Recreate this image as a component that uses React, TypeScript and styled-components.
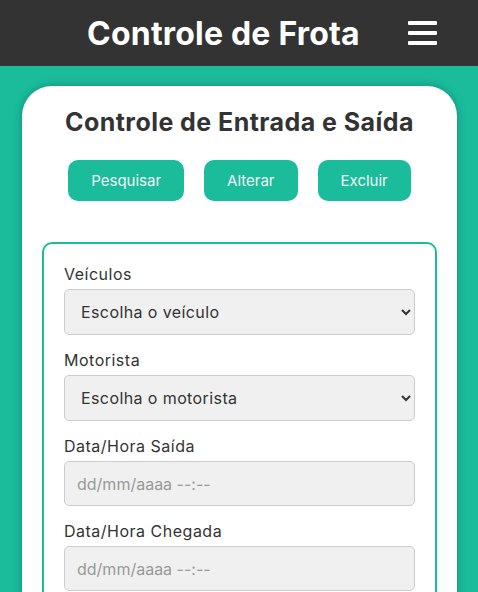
import styled, { createGlobalStyle } from "styled-components";

const GlobalStyle = createGlobalStyle`
  * {
    box-sizing: border-box;
  }

  html, body {
    margin: 0;
    padding: 0;
    background-color: #1abc9c;
    font-family: Inter, "Open Sans", "Liberation Sans", sans-serif;
    color: #333;
  }
`;

const Header = styled.header`
  height: 66px;
  background-color: #333;
  display: flex;
  align-items: center;
  padding: 0 41px 0 39px;
`;

const Title = styled.h1`
  flex: 1;
  margin: 0;
  text-align: center;
  color: #fff;
  font-size: 32px;
  font-weight: 700;
  letter-spacing: 0.2px;
`;

const MenuButton = styled.button`
  width: 29px;
  padding: 0;
  border: none;
  background: none;
  display: flex;
  flex-direction: column;
  gap: 6px;
  cursor: pointer;

  span {
    display: block;
    height: 4px;
    border-radius: 1px;
    background-color: #fff;
  }
`;

const Main = styled.main`
  padding: 20px 21px 0 22px;
`;

const Card = styled.section`
  background-color: #fff;
  border-radius: 30px;
  box-shadow: 0 0 10px rgba(0, 0, 0, 0.25);
  padding: 20px 20px 40px;
`;

const CardTitle = styled.h2`
  margin: 1px 0 0;
  text-align: center;
  font-size: 25px;
  font-weight: 700;
  letter-spacing: 0.45px;
  color: #333;
  line-height: 30px;
`;

const Actions = styled.div`
  display: flex;
  justify-content: center;
  gap: 20px;
  margin-top: 23px;
`;

const ActionButton = styled.button`
  height: 41px;
  padding: 0 23px;
  border: none;
  border-radius: 10px;
  background-color: #1abc9c;
  color: #f4f4f4;
  font-family: inherit;
  font-size: 15px;
  cursor: pointer;
`;

const Fieldset = styled.fieldset`
  margin: 41px 0 0;
  border: 2px solid #1abc9c;
  border-radius: 10px;
  padding: 20px 20px 20px;
  display: flex;
  flex-direction: column;
  gap: 15px;
`;

const Field = styled.label`
  display: flex;
  flex-direction: column;
  gap: 5px;
`;

const LabelText = styled.span`
  font-size: 16px;
  line-height: 20px;
  letter-spacing: 0.5px;
  color: #333;
`;

const Select = styled.select`
  height: 46px;
  padding: 0 10px 0 12px;
  border: 1px solid #ccc;
  border-radius: 5px;
  background-color: #f0f0f0;
  color: #333;
  font-family: inherit;
  font-size: 16px;
  letter-spacing: 0.4px;
`;

const Input = styled.input`
  height: 45px;
  padding: 0 12px;
  border: 1px solid #ccc;
  border-radius: 5px;
  background-color: #f0f0f0;
  color: #333;
  font-family: inherit;
  font-size: 16px;

  &::placeholder {
    color: #999;
  }
`;

export default function App() {
  return (
    <>
      <GlobalStyle />
      <Header>
        <Title>Controle de Frota</Title>
        <MenuButton aria-label="Menu">
          <span />
          <span />
          <span />
        </MenuButton>
      </Header>
      <Main>
        <Card>
          <CardTitle>Controle de Entrada e Saída</CardTitle>
          <Actions>
            <ActionButton>Pesquisar</ActionButton>
            <ActionButton>Alterar</ActionButton>
            <ActionButton>Excluir</ActionButton>
          </Actions>
          <Fieldset>
            <Field>
              <LabelText>Veículos</LabelText>
              <Select defaultValue="">
                <option value="">Escolha o veículo</option>
              </Select>
            </Field>
            <Field>
              <LabelText>Motorista</LabelText>
              <Select defaultValue="">
                <option value="">Escolha o motorista</option>
              </Select>
            </Field>
            <Field>
              <LabelText>Data/Hora Saída</LabelText>
              <Input type="text" placeholder="dd/mm/aaaa --:--" />
            </Field>
            <Field>
              <LabelText>Data/Hora Chegada</LabelText>
              <Input type="text" placeholder="dd/mm/aaaa --:--" />
            </Field>
          </Fieldset>
        </Card>
      </Main>
    </>
  );
}
